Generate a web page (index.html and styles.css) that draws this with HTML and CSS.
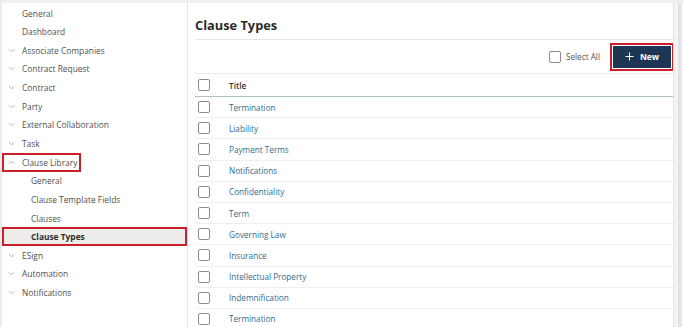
FILE: index.html
```html
<!DOCTYPE html>
<html>
<head>
<meta charset="utf-8">
<link rel="stylesheet" href="styles.css">
</head>
<body>
<div class="page">
  <nav class="sidebar">
    <div class="nav-item"><span class="chev-space"></span><span>General</span></div>
    <div class="nav-item"><span class="chev-space"></span><span>Dashboard</span></div>
    <div class="nav-item"><svg class="chev" viewBox="0 0 8 5"><polyline points="1,1 4,4 7,1"/></svg><span>Associate Companies</span></div>
    <div class="nav-item"><svg class="chev" viewBox="0 0 8 5"><polyline points="1,1 4,4 7,1"/></svg><span>Contract Request</span></div>
    <div class="nav-item"><svg class="chev" viewBox="0 0 8 5"><polyline points="1,1 4,4 7,1"/></svg><span>Contract</span></div>
    <div class="nav-item"><svg class="chev" viewBox="0 0 8 5"><polyline points="1,1 4,4 7,1"/></svg><span>Party</span></div>
    <div class="nav-item"><svg class="chev" viewBox="0 0 8 5"><polyline points="1,1 4,4 7,1"/></svg><span>External Collaboration</span></div>
    <div class="nav-item"><svg class="chev" viewBox="0 0 8 5"><polyline points="1,1 4,4 7,1"/></svg><span>Task</span></div>
    <div class="nav-item"><span class="marked"><svg class="chev" viewBox="0 0 8 5"><polyline points="1,4 4,1 7,4"/></svg><span>Clause Library</span></span></div>
    <div class="nav-item sub"><span>General</span></div>
    <div class="nav-item sub"><span>Clause Template Fields</span></div>
    <div class="nav-item sub"><span>Clauses</span></div>
    <div class="nav-item sub active"><span>Clause Types</span></div>
    <div class="nav-item"><svg class="chev" viewBox="0 0 8 5"><polyline points="1,1 4,4 7,1"/></svg><span>ESign</span></div>
    <div class="nav-item"><svg class="chev" viewBox="0 0 8 5"><polyline points="1,1 4,4 7,1"/></svg><span>Automation</span></div>
    <div class="nav-item"><svg class="chev" viewBox="0 0 8 5"><polyline points="1,1 4,4 7,1"/></svg><span>Notifications</span></div>
  </nav>
  <main class="main">
    <h1 class="title">Clause Types</h1>
    <div class="toolbar">
      <label class="select-all"><span class="box"></span><span>Select All</span></label>
      <button class="btn-new"><svg class="plus" viewBox="0 0 10 10"><path d="M5 0.5V9.5M0.5 5H9.5"/></svg><span>New</span></button>
    </div>
    <div class="table">
      <div class="row head"><span class="box"></span><span class="cell">Title</span></div>
      <div class="row"><span class="box"></span><a class="cell link">Termination</a></div>
      <div class="row"><span class="box"></span><a class="cell link">Liability</a></div>
      <div class="row"><span class="box"></span><a class="cell link">Payment Terms</a></div>
      <div class="row"><span class="box"></span><a class="cell link">Notifications</a></div>
      <div class="row"><span class="box"></span><a class="cell link">Confidentiality</a></div>
      <div class="row"><span class="box"></span><a class="cell link">Term</a></div>
      <div class="row"><span class="box"></span><a class="cell link">Governing Law</a></div>
      <div class="row"><span class="box"></span><a class="cell link">Insurance</a></div>
      <div class="row"><span class="box"></span><a class="cell link">Intellectual Property</a></div>
      <div class="row"><span class="box"></span><a class="cell link">Indemnification</a></div>
      <div class="row"><span class="box"></span><a class="cell link">Termination</a></div>
    </div>
  </main>
  <div class="gutter"><div class="thumb"></div></div>
</div>
</body>
</html>
```
FILE: styles.css
```css
* { box-sizing: border-box; }
html, body { margin: 0; padding: 0; }
body {
  background: #efefef;
  font-family: "Open Sans", "Noto Sans", sans-serif;
  color: #444;
  overflow: hidden;
}
.page {
  display: flex;
  height: 324px;
  margin-top: 3px;
  background: #fff;
  overflow: hidden;
}
.sidebar {
  width: 188px;
  flex: none;
  border-left: 2px solid #ececec;
  border-right: 1px solid #e4e4e4;
  padding-top: 0.7px;
}
.nav-item {
  height: 18.65px;
  display: flex;
  align-items: center;
  font-size: 8.4px;
  color: #4f4f4f;
  padding-left: 6px;
  white-space: nowrap;
}
.chev-space, .chev {
  width: 7px;
  height: 5px;
  margin-right: 7px;
  flex: none;
}
.chev polyline {
  fill: none;
  stroke: #a0a0a0;
  stroke-width: 0.9;
}
.marked {
  display: flex;
  align-items: center;
  height: 19px;
  margin-left: -6px;
  padding-left: 6px;
  width: 79px;
  border: 2px solid #c9202c;
}
.marked .chev { margin-left: -2px; }
.nav-item.sub { padding-left: 29px; }
.nav-item.active {
  background: #eeedeb;
  font-weight: 700;
  color: #2e2e2e;
  outline: 2px solid #c9202c;
  outline-offset: -2px;
}
.main {
  flex: 1;
  padding-left: 7px;
  display: flex;
  flex-direction: column;
  overflow: hidden;
}
.main > * { flex: none; }
.title {
  margin: 0;
  font-size: 12.8px;
  font-weight: 700;
  color: #2b2b2b;
  line-height: 18px;
  padding-top: 13px;
  padding-bottom: 5px;
  border-bottom: 1px solid #e6e6e6;
}
.toolbar {
  height: 33px;
  display: flex;
  align-items: center;
  justify-content: flex-end;
  padding-right: 2px;
}
.select-all {
  display: flex;
  align-items: center;
  font-size: 8.2px;
  color: #555;
  margin-right: 13px;
}
.box {
  width: 12px;
  height: 12px;
  border: 1px solid #8c8c8c;
  border-radius: 2px;
  flex: none;
  background: #fff;
}
.select-all .box { margin-right: 5px; }
.btn-new {
  width: 58px;
  height: 22px;
  background: #1c3654;
  border: none;
  color: #fff;
  font-family: inherit;
  font-weight: 700;
  font-size: 8.5px;
  display: flex;
  align-items: center;
  justify-content: center;
  gap: 6px;
  outline: 2px solid #c9202c;
  outline-offset: 1px;
  padding: 0;
}
.plus { width: 9px; height: 9px; }
.plus path { stroke: #fff; stroke-width: 1.1; fill: none; }
.table {
  border-top: 1px solid #ebebeb;
}
.row {
  height: 21.2px;
  display: flex;
  align-items: center;
  padding-left: 3px;
  border-bottom: 1px solid #efefef;
}
.row.head {
  height: 23px;
  border-bottom: 1px solid #aec3cc;
}
.cell {
  margin-left: 19px;
  font-size: 8.2px;
}
.head .cell { font-weight: 600; color: #333; }
.link { color: #2f6d8f; text-decoration: none; }
.gutter {
  width: 10px;
  flex: none;
  background: #f3f3f3;
  border-left: 1px solid #e3e3e3;
  display: flex;
  justify-content: center;
  padding-left: 2px;
}
.thumb {
  width: 3px;
  background: #e2e2e2;
}
```
